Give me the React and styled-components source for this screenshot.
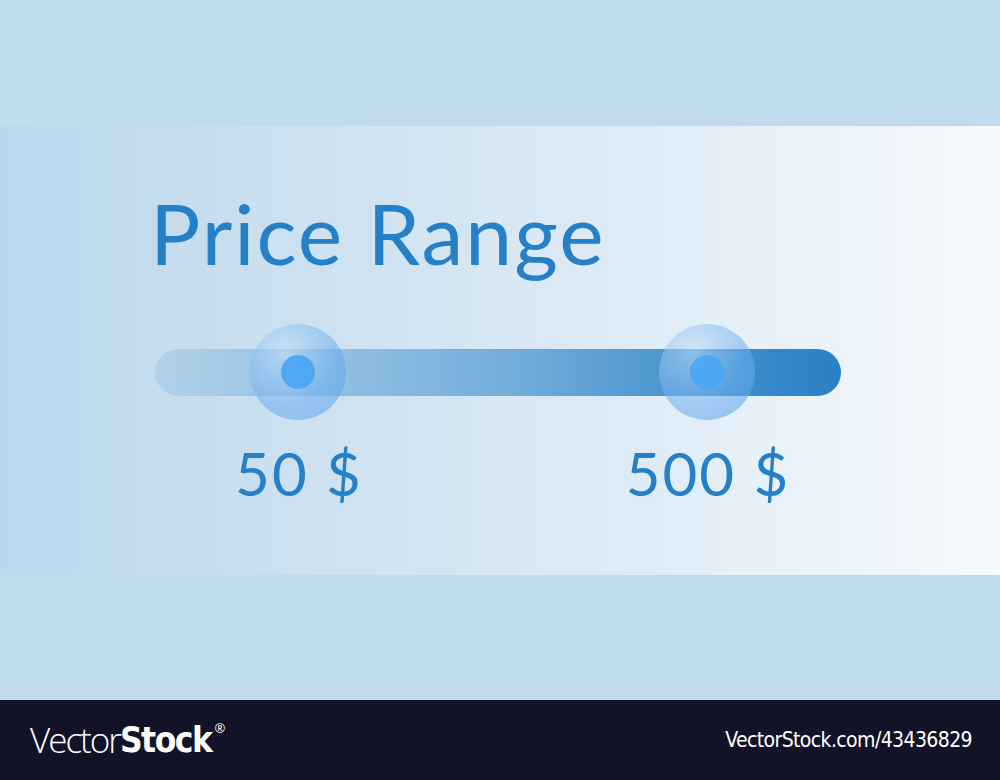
import styled, { createGlobalStyle } from "styled-components";

const GlobalStyle = createGlobalStyle`
    html, body {
        margin: 0;
        padding: 0;
        background: #c0dbed;
    }
`;

export default function App() {
    return (
        <Page>
            <GlobalStyle />
            <Spacer height={126} />
            <Band>
                <Title>Price Range</Title>
                <Slider>
                    <Track />
                    <Thumb left={298} />
                    <Thumb left={707} />
                </Slider>
                <Labels>
                    <Label center={299}>50 $</Label>
                    <Label center={708}>500 $</Label>
                </Labels>
            </Band>
            <Spacer height={125} />
            <Footer>
                <Logo>
                    <Thin>Vector</Thin>
                    <Bold>Stock</Bold>
                    <Reg>®</Reg>
                </Logo>
                <Link>VectorStock.com/43436829</Link>
            </Footer>
        </Page>
    );
}

const Page = styled.div `
    width: 1000px;
    height: 780px;
    display: flex;
    flex-direction: column;
    background: #c0dbed;
    overflow: hidden;
`;

const Spacer = styled.div `
    height: ${props => props.height}px;
    flex-shrink: 0;
`;

const Band = styled.div `
    height: 449px;
    flex-shrink: 0;
    display: flex;
    flex-direction: column;
    background: linear-gradient(90deg, #bad7ec 0%, #cfe2f1 35%, #dfecf6 65%, #f6fafd 100%);
`;

const Title = styled.h1 `
    margin: 62px 0 0 150px;
    font-family: "Lato", "Liberation Sans", sans-serif;
    font-weight: 400;
    font-size: 84px;
    line-height: 90px;
    letter-spacing: 2px;
    color: #2680c7;
`;

const Slider = styled.div `
    position: relative;
    margin-top: 46px;
    height: 96px;
    display: flex;
    align-items: center;
`;

const Track = styled.div `
    margin-left: 155px;
    width: 686px;
    height: 47px;
    border-radius: 24px;
    background: linear-gradient(90deg, rgba(38, 128, 199, 0.12) 0%, rgba(38, 128, 199, 0.35) 25%, rgba(38, 128, 199, 0.6) 55%, rgba(38, 128, 199, 0.85) 80%, #2a80c3 100%);
`;

const Thumb = styled.div `
    position: absolute;
    top: 0;
    left: ${props => props.left - 48}px;
    width: 96px;
    height: 96px;
    border-radius: 50%;
    background: radial-gradient(circle at 35% 30%, rgba(200, 226, 248, 0.55) 0%, rgba(110, 175, 240, 0.55) 55%, rgba(80, 160, 235, 0.6) 100%);

    &::after {
        content: "";
        position: absolute;
        left: 31px;
        top: 31px;
        width: 34px;
        height: 34px;
        border-radius: 50%;
        background: #4ba7f2;
        opacity: 0.95;
    }
`;

const Labels = styled.div `
    position: relative;
    height: 70px;
    margin-top: 18px;
`;

const Label = styled.div `
    position: absolute;
    left: ${props => props.center - 100}px;
    width: 200px;
    text-align: center;
    font-family: "Lato", "Liberation Sans", sans-serif;
    font-size: 60px;
    line-height: 70px;
    letter-spacing: 2px;
    color: #2680c7;
`;

const Footer = styled.div `
    height: 80px;
    flex-shrink: 0;
    background: #121326;
    display: flex;
    align-items: center;
    justify-content: space-between;
    padding: 0 28px 0 30px;
    color: #ffffff;
`;

const Logo = styled.div `
    display: flex;
    align-items: flex-start;
    font-size: 35px;
    line-height: 40px;
`;

const Thin = styled.span `
    font-family: "Open Sans", sans-serif;
    font-weight: 300;
    letter-spacing: -2px;
`;

const Bold = styled.span `
    font-family: "DejaVu Sans Condensed", "Open Sans", sans-serif;
    font-weight: 700;
    letter-spacing: -1.5px;
`;

const Reg = styled.span `
    font-family: "Open Sans", sans-serif;
    font-size: 13px;
    line-height: 16px;
    margin-left: 3px;
    font-weight: 400;
`;

const Link = styled.div `
    font-family: "DejaVu Sans Condensed", "Open Sans", sans-serif;
    font-size: 21px;
    letter-spacing: -0.6px;
`;
